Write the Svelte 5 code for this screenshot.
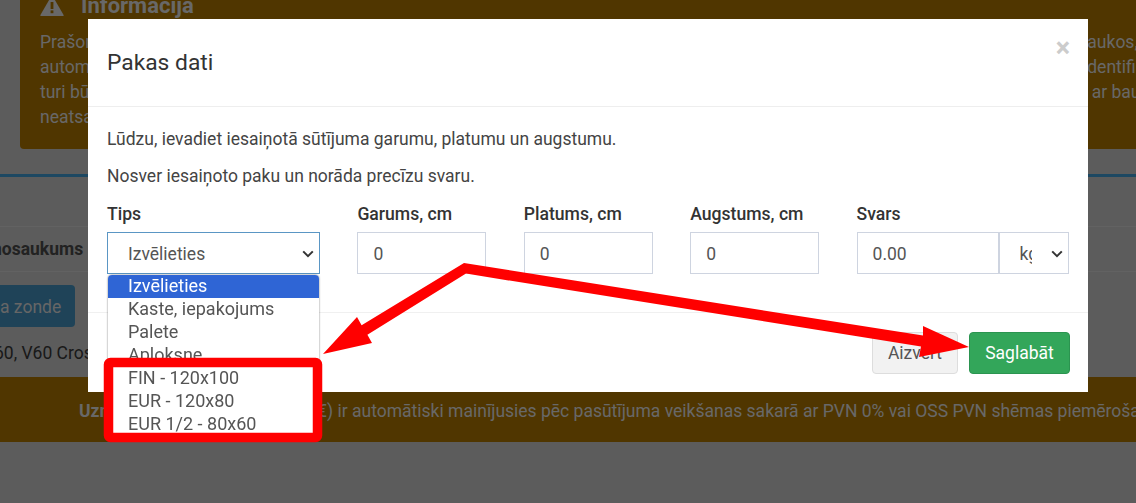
<script>
  const fields = [
    { label: 'Garums, cm', value: '0' },
    { label: 'Platums, cm', value: '0' },
    { label: 'Augstums, cm', value: '0' }
  ];
  const options = ['Izvēlieties', 'Kaste, iepakojums', 'Palete', 'Aploksne', 'FIN - 120x100', 'EUR - 120x80', 'EUR 1/2 - 80x60'];
</script>

<div class="page">
  <div class="alert">
    <h4>
      <svg class="warn" width="24" height="21" viewBox="0 0 24 21"><path d="M12 0l11.6 20a.7.7 0 0 1-.6 1H1a.7.7 0 0 1-.6-1z" fill="currentColor" /><rect x="10.6" y="7" width="2.8" height="7" fill="#a06c00" /><rect x="10.6" y="15.4" width="2.8" height="2.8" fill="#a06c00" /></svg>
      Informācija
    </h4>
    <div class="line"><span>Prašor</span><span>&nbsp;aukos,</span></div>
    <div class="line"><span>autom</span><span>identifi</span></div>
    <div class="line"><span>turi bū</span><span>&nbsp;&nbsp;ar bau</span></div>
    <div class="line"><span>neatsa</span><span></span></div>
  </div>

  <div class="section">
    <div class="row-head"><b>nosaukums</b></div>
    <button class="zonde">a zonde</button>
    <p class="models">60, V60 Cross</p>
    <div class="notice"><b>Uzn</b><span>€) ir automātiski mainījusies pēc pasūtījuma veikšanas sakarā ar PVN 0% vai OSS PVN shēmas piemērošanas</span></div>
  </div>
</div>

<div class="backdrop"></div>

<div class="modal">
  <div class="modal-header">
    <h5>Pakas dati</h5>
    <span class="close">×</span>
  </div>
  <div class="modal-body">
    <p>Lūdzu, ievadiet iesaiņotā sūtījuma garumu, platumu un augstumu.</p>
    <p>Nosver iesaiņoto paku un norāda precīzu svaru.</p>
    <div class="form">
      <div class="field tips">
        <span class="label">Tips</span>
        <div class="control select focus">
          Izvēlieties
          <svg class="chev" width="12" height="8" viewBox="0 0 12 8"><path d="M1.2 1.4L6 6.2l4.8-4.8" fill="none" stroke="#333" stroke-width="2" /></svg>
        </div>
        <ul class="list">
          {#each options as o, i}
            <li class:sel={i === 0}>{o}</li>
          {/each}
        </ul>
      </div>
      {#each fields as f}
        <div class="field num">
          <span class="label">{f.label}</span>
          <div class="control">{f.value}</div>
        </div>
      {/each}
      <div class="field svars">
        <span class="label">Svars</span>
        <div class="group">
          <div class="control weight">0.00</div>
          <div class="control select unit">
            <span class="clip">kg</span>
            <svg class="chev" width="12" height="8" viewBox="0 0 12 8"><path d="M1.2 1.4L6 6.2l4.8-4.8" fill="none" stroke="#333" stroke-width="2" /></svg>
          </div>
        </div>
      </div>
    </div>
  </div>
  <div class="modal-footer">
    <button class="btn close-btn">Aizvērt</button>
    <button class="btn save">Saglabāt</button>
  </div>
</div>

<!-- red annotation drawn over the screenshot -->
<svg class="marks" width="1136" height="503" viewBox="0 0 1136 503">
  <rect x="108.5" y="362.5" width="209" height="75" rx="2" fill="none" stroke="#ff0000" stroke-width="9.5" />
  <path d="M323 354L357 317L361.600 325.300L464 263L923 335.600L923 326L969 347L919 357L921 346.400L466 273.600L367.400 334.700L372 343Z" fill="#ff0000" />
</svg>

<style>
  :global(body) {
    margin: 0;
    font-family: Roboto, "Liberation Sans", sans-serif;
  }
  .page {
    height: 503px;
    overflow: hidden;
    background: #b8b8b8;
    color: #ccc;
    font-size: 17.500px;
  }
  .alert {
    margin: -16px 0 0 20px;
    width: 1200px;
    height: 165px;
    padding: 9px 20px 0;
    box-sizing: border-box;
    background: #a06c00;
    border-radius: 4px;
    line-height: 25px;
    color: #d0d0d0;
  }
  h4 {
    display: flex;
    align-items: center;
    gap: 17px;
    margin: 0 0 12px;
    font-size: 22px;
    font-weight: 700;
  }
  .line {
    display: grid;
    grid-template-columns: 1043px auto;
    white-space: nowrap;
  }
  .section {
    margin-top: 25px;
    border-top: 3px solid #3a90c4;
  }
  .row-head {
    margin-top: 49px;
    height: 46px;
    box-sizing: border-box;
    border-top: 1px solid #c4c4c4;
    border-bottom: 1px solid #c4c4c4;
    display: flex;
    align-items: center;
    color: #444;
    white-space: nowrap;
    overflow: hidden;
  }
  .row-head b {
    margin-left: -8px;
  }
  .zonde {
    display: block;
    margin-top: 13px;
    width: 75px;
    height: 42px;
    padding: 2px 0 0;
    border: 0;
    border-radius: 0 4px 4px 0;
    background: #3e86b0;
    color: #ccc;
    font: 17.500px Roboto, sans-serif;
    text-align: left;
    white-space: nowrap;
  }
  .models {
    margin: 14px 0 12px -6px;
    line-height: 24px;
    color: #333;
  }
  .notice {
    height: 65px;
    background: #a06c00;
    display: flex;
    padding: 22px 0 0 79px;
    box-sizing: border-box;
    white-space: nowrap;
    color: #d0d0d0;
    line-height: 24px;
  }
  .notice span {
    margin-left: 208px;
  }
  .backdrop {
    position: fixed;
    inset: 0;
    background: rgba(0, 0, 0, 0.5);
  }
  .modal {
    position: absolute;
    left: 88px;
    top: 19px;
    width: 1000px;
    height: 373px;
    background: #fff;
    color: #444;
    font-size: 17.500px;
  }
  .modal-header {
    height: 88px;
    box-sizing: border-box;
    border-bottom: 1px solid #eee;
    padding: 29px 19px 0;
    display: flex;
    justify-content: space-between;
  }
  h5 {
    margin: 0;
    font-size: 22.800px;
    font-weight: 400;
    line-height: 30px;
    color: #333;
  }
  .close {
    color: #ccc;
    font-size: 27px;
    font-weight: 700;
    line-height: 1;
    margin: -13px -1px 0 0;
  }
  .modal-body {
    height: 206px;
    box-sizing: border-box;
    padding: 20px 19px 0;
    border-bottom: 1px solid #f0f0f0;
    line-height: 24px;
  }
  p {
    margin: 0 0 13px;
  }
  .form {
    display: flex;
    gap: 37.400px;
    margin-top: 14px;
  }
  .field {
    position: relative;
    flex: none;
  }
  .tips { width: 213px; }
  .num { width: 129px; }
  .svars { width: 212px; }
  .label {
    display: block;
    font-size: 17.600px;
    font-weight: 500;
    color: #333;
    margin-bottom: 6px;
  }
  .control {
    height: 42px;
    box-sizing: border-box;
    border: 1px solid #ced4e0;
    padding: 2px 15px 0;
    display: flex;
    align-items: center;
    color: #555;
    font-size: 17.500px;
  }
  .select {
    position: relative;
    padding-left: 20px;
  }
  .focus {
    border-color: #5a96c4;
  }
  .chev {
    position: absolute;
    right: 5px;
    top: 17px;
  }
  .group {
    display: flex;
  }
  .weight { width: 142px; }
  .unit {
    width: 70px;
    border-left-width: 1px;
  }
  .clip {
    display: block;
    width: 12px;
    overflow: hidden;
  }
  .list {
    position: absolute;
    left: 1px;
    top: 73px;
    width: 211px;
    height: 160px;
    box-sizing: border-box;
    margin: 0;
    padding: 0;
    list-style: none;
    background: #fff;
    border-radius: 4px 4px 0 0;
    box-shadow: 0 0 2px rgba(0, 0, 0, 0.6);
    font-size: 18px;
    color: #555;
    overflow: hidden;
  }
  li {
    height: 23px;
    line-height: 22px;
    padding-left: 20px;
  }
  li.sel {
    background: #2f65d5;
    color: #fff;
  }
  .modal-footer {
    display: flex;
    justify-content: flex-end;
    gap: 11px;
    padding: 19px 18px 0;
  }
  .btn {
    height: 42px;
    padding: 0;
    border-radius: 4px;
    font: 17.500px Roboto, sans-serif;
  }
  .close-btn {
    width: 86px;
    background: #f2f2f2;
    border: 1px solid #ddd;
    color: #555;
  }
  .save {
    width: 101px;
    background: #33a65a;
    border: 1px solid #2b9450;
    color: #fff;
  }
  .marks {
    position: absolute;
    left: 0;
    top: 0;
  }
</style>
